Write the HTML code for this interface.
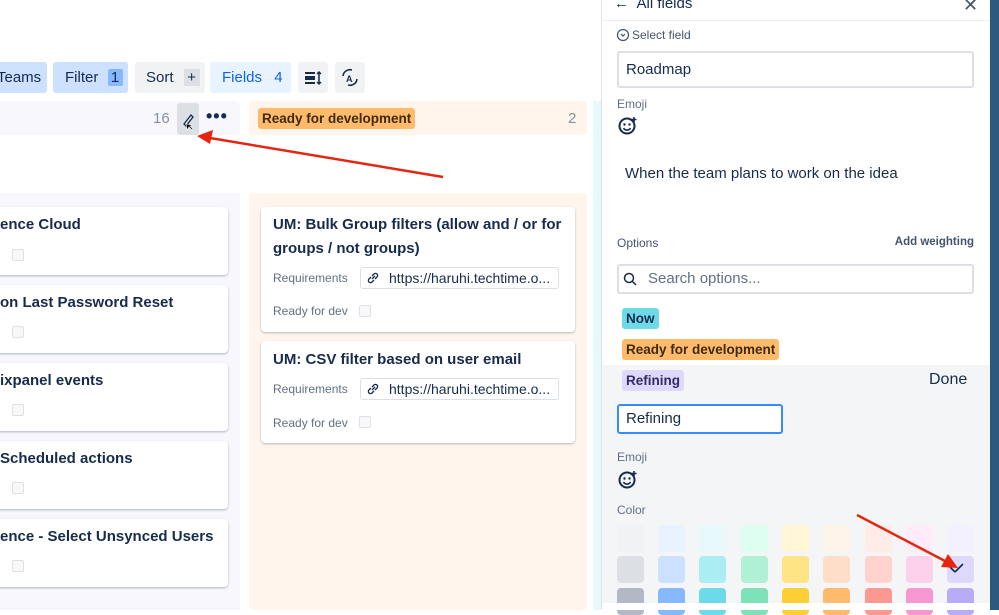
<!DOCTYPE html>
<html><head><style>
*{box-sizing:border-box;margin:0;padding:0}
body{width:999px;height:610px;overflow:hidden;background:#fff;font-family:"Liberation Sans",sans-serif;color:#172b4d;position:relative}
.a{position:absolute}
.btn{position:absolute;top:62px;height:31px;border-radius:3px;font-size:15px;line-height:31px;font-weight:500}
.card{position:absolute;background:#fff;border-radius:4px;box-shadow:0 1px 2px rgba(9,30,66,.3)}
.t{font-weight:bold;font-size:15px;color:#172b4d}
.cb{position:absolute;width:12px;height:12px;border:1px solid #dfe1e6;background:#f7f8f9;border-radius:2px}
.sm{font-size:12px;color:#626f86}
.link{position:absolute;height:22px;border:1px solid #dcdfe4;border-radius:3px;font-size:14px;line-height:20px;padding-left:28px;white-space:nowrap}
.sw{position:absolute;width:27px;height:27px;border-radius:4px}
.tag{position:absolute;border-radius:3px;padding:0 4px;height:21px;line-height:21px;font-size:13.5px;font-weight:bold}
</style></head><body>
<!-- toolbar -->
<div class="btn" style="left:-10px;width:57px;background:#cce0ff;padding-left:7px">Teams</div>
<div class="btn" style="left:53px;width:75px;background:#cce0ff;padding-left:12px">Filter <span style="display:inline-block;background:#85b8ff;width:15px;height:17px;line-height:17px;text-align:center;margin-left:5px;border-radius:2px">1</span></div>
<div class="btn" style="left:135px;width:70px;background:#f1f2f4;padding-left:11px">Sort <span style="display:inline-block;background:#dcdfe4;width:16px;height:17px;line-height:17px;text-align:center;margin-left:6px">+</span></div>
<div class="btn" style="left:210px;width:81px;background:#e9f2ff;color:#0c66e4;padding-left:12px">Fields <span style="margin-left:8px">4</span></div>
<div class="btn" style="left:298px;width:30px;background:#f1f2f4"><svg width="30" height="31"><rect x="7" y="10" width="10" height="2" fill="#172b4d"/><rect x="7" y="14" width="10" height="4" fill="#172b4d"/><rect x="7" y="20" width="10" height="2" fill="#172b4d"/><path d="M21 10v12M19 12l2-2 2 2M19 20l2 2 2-2" stroke="#172b4d" stroke-width="1.5" fill="none"/></svg></div>
<div class="btn" style="left:335px;width:30px;background:#f1f2f4"><svg width="30" height="31"><path d="M8 14a7 7 0 0 1 9-6M22 17a7 7 0 0 1-9 6" stroke="#172b4d" stroke-width="1.6" fill="none"/><text x="11" y="20" font-size="9" font-weight="bold" fill="#172b4d" font-family="Liberation Sans">A</text></svg></div>
<!-- left column -->
<div class="a" style="left:0;top:101px;width:240px;height:34px;background:#f7f7fd;border-radius:0 4px 4px 0"></div>
<div class="a" style="left:153px;top:110px;font-size:15px;color:#8590a2">16</div>
<div class="a" style="left:177px;top:103px;width:22px;height:32px;background:#dcdfe4;border-radius:3px"><svg width="22" height="32"><path d="M7 21l7-9 2 2-7 9z" stroke="#172b4d" fill="none" stroke-width="1.3"/><path d="M9 21l1 6 2-3 3 3 1-1-3-3 3-1z" fill="#000" stroke="#fff" stroke-width=".6"/></svg></div>
<div class="a" style="left:206px;top:106px;font-size:18px;font-weight:bold;letter-spacing:1px">•••</div>
<div class="a" style="left:0;top:193px;width:240px;height:417px;background:#f7f7fd"></div>
<div class="card" style="left:-5px;top:207px;width:233px;height:68px"><div class="t a" style="left:5px;top:9px">ence Cloud</div><div class="cb" style="left:17px;top:42px"></div></div>
<div class="card" style="left:-5px;top:285px;width:233px;height:68px"><div class="t a" style="left:5px;top:9px">on Last Password Reset</div><div class="cb" style="left:17px;top:41px"></div></div>
<div class="card" style="left:-5px;top:363px;width:233px;height:68px"><div class="t a" style="left:5px;top:9px">ixpanel events</div><div class="cb" style="left:17px;top:41px"></div></div>
<div class="card" style="left:-5px;top:441px;width:233px;height:68px"><div class="t a" style="left:5px;top:9px">Scheduled actions</div><div class="cb" style="left:17px;top:41px"></div></div>
<div class="card" style="left:-5px;top:519px;width:233px;height:68px"><div class="t a" style="left:5px;top:9px">ence - Select Unsynced Users</div><div class="cb" style="left:17px;top:41px"></div></div>
<!-- right column -->
<div class="a" style="left:249px;top:101px;width:338px;height:34px;background:#fff5ec;border-radius:4px"></div>
<div class="tag" style="left:258px;top:108px;background:#ffbb6b;color:#3d2a10">Ready for development</div>
<div class="a" style="left:568px;top:110px;font-size:15px;color:#8590a2">2</div>
<div class="a" style="left:249px;top:193px;width:338px;height:417px;background:#fff5ec;border-radius:4px"></div>
<div class="card" style="left:261px;top:207px;width:314px;height:125px">
<div class="t a" style="left:12px;top:6px;line-height:24px;width:295px">UM: Bulk Group filters (allow and / or for groups / not groups)</div>
<div class="sm a" style="left:12px;top:64px">Requirements</div>
<div class="link" style="left:99px;top:60px;width:199px">https://haruhi.techtime.o...</div>
<svg class="a" style="left:105px;top:64px" width="14" height="14"><path d="M6 8l3-3M5 6l-2 2a2 2 0 0 0 3 3l2-2M9 8l2-2a2 2 0 0 0-3-3L6 5" stroke="#172b4d" stroke-width="1.3" fill="none"/></svg>
<div class="sm a" style="left:12px;top:97px">Ready for dev</div><div class="cb" style="left:98px;top:98px"></div></div>
<div class="card" style="left:261px;top:341px;width:314px;height:102px">
<div class="t a" style="left:12px;top:10px">UM: CSV filter based on user email</div>
<div class="sm a" style="left:12px;top:41px">Requirements</div>
<div class="link" style="left:99px;top:37px;width:199px">https://haruhi.techtime.o...</div>
<svg class="a" style="left:105px;top:41px" width="14" height="14"><path d="M6 8l3-3M5 6l-2 2a2 2 0 0 0 3 3l2-2M9 8l2-2a2 2 0 0 0-3-3L6 5" stroke="#172b4d" stroke-width="1.3" fill="none"/></svg>
<div class="sm a" style="left:12px;top:75px">Ready for dev</div><div class="cb" style="left:98px;top:75px"></div></div>
<div class="a" style="left:593px;top:101px;width:8px;height:509px;background:#e7f9fc"></div>
<svg class="a" style="left:0;top:0" width="999" height="610"><line x1="443" y1="177" x2="210" y2="138" stroke="#e5260f" stroke-width="2.5"/><path d="M197 136l16-6-3 14z" fill="#e5260f"/></svg>
<!-- panel -->
<div class="a" style="left:601px;top:0;width:389px;height:610px;background:#fff;border-left:1px solid #dfe1e6"></div>
<div class="a" style="left:990px;top:0;width:9px;height:610px;background:#2c5a7e"></div>
<div class="a" style="left:601px;top:20px;width:389px;height:1px;background:#eceef1"></div>
<div class="a" style="left:614px;top:-5px;font-size:15px;font-weight:500">&larr;&nbsp; All fields</div>
<div class="a" style="left:963px;top:-5px;font-size:18px;color:#44546f">✕</div>
<svg class="a" style="left:616px;top:28px" width="14" height="14"><circle cx="7" cy="7" r="5.5" stroke="#44546f" fill="none" stroke-width="1.2"/><path d="M5 6l2 2 2-2" stroke="#44546f" fill="none" stroke-width="1.2"/></svg>
<div class="a" style="left:632px;top:28px;font-size:12px;color:#44546f">Select field</div>
<div class="a" style="left:617px;top:51px;width:357px;height:37px;border:2px solid #dcdfe4;border-radius:3px;font-size:15px;line-height:33px;padding-left:7px">Roadmap</div>
<div class="a" style="left:617px;top:97px;font-size:12px;color:#626f86">Emoji</div>
<svg class="a" style="left:617px;top:116px" width="22" height="20"><circle cx="10" cy="10" r="7.5" stroke="#172b4d" stroke-width="2" fill="none"/><circle cx="7.5" cy="8.5" r="1.2" fill="#172b4d"/><circle cx="12.5" cy="8.5" r="1.2" fill="#172b4d"/><path d="M6.5 12a4 4 0 0 0 7 0" stroke="#172b4d" stroke-width="1.6" fill="none"/><path d="M17 1v5M14.5 3.5h5" stroke="#172b4d" stroke-width="1.6"/></svg>
<div class="a" style="left:625px;top:165px;font-size:15px">When the team plans to work on the idea</div>
<div class="a" style="left:617px;top:236px;font-size:12px;color:#44546f">Options</div>
<div class="a" style="right:25px;top:236px;font-size:11.5px;color:#44546f;font-weight:bold">Add weighting</div>
<div class="a" style="left:617px;top:264px;width:357px;height:30px;border:2px solid #dcdfe4;border-radius:3px;font-size:15px;line-height:26px;padding-left:29px;color:#626f86">Search options...</div>
<svg class="a" style="left:623px;top:272px" width="14" height="14"><circle cx="6" cy="6" r="4.5" stroke="#172b4d" stroke-width="1.5" fill="none"/><path d="M9.5 9.5l3.5 3.5" stroke="#172b4d" stroke-width="1.5"/></svg>
<div class="tag" style="left:622px;top:308px;background:#6cdae9">Now</div>
<div class="tag" style="left:622px;top:339px;background:#ffbb6b;color:#3d2a10">Ready for development</div>
<div class="a" style="left:602px;top:365px;width:388px;height:245px;background:#f4f5f7"></div>
<div class="tag" style="left:622px;top:370px;background:#dfd8fd;color:#352c63">Refining</div>
<div class="a" style="left:929px;top:371px;font-size:16px;font-weight:500">Done</div>
<div class="a" style="left:617px;top:404px;width:166px;height:30px;border:2px solid #388bff;border-radius:3px;background:#fff;font-size:15px;line-height:26px;padding-left:7px">Refining</div>
<div class="a" style="left:617px;top:450px;font-size:12px;color:#626f86">Emoji</div>
<svg class="a" style="left:617px;top:470px" width="22" height="20"><circle cx="10" cy="10" r="7.5" stroke="#172b4d" stroke-width="2" fill="none"/><circle cx="7.5" cy="8.5" r="1.2" fill="#172b4d"/><circle cx="12.5" cy="8.5" r="1.2" fill="#172b4d"/><path d="M6.5 12a4 4 0 0 0 7 0" stroke="#172b4d" stroke-width="1.6" fill="none"/><path d="M17 1v5M14.5 3.5h5" stroke="#172b4d" stroke-width="1.6"/></svg>
<div class="a" style="left:617px;top:503px;font-size:12px;color:#626f86">Color</div>
<div class="sw" style="left:617px;top:525px;background:#f1f2f4"></div><div class="sw" style="left:658px;top:525px;background:#e9f2ff"></div><div class="sw" style="left:699px;top:525px;background:#e7f9fc"></div><div class="sw" style="left:741px;top:525px;background:#dcfff1"></div><div class="sw" style="left:782px;top:525px;background:#fff7d6"></div><div class="sw" style="left:823px;top:525px;background:#fff4e8"></div><div class="sw" style="left:865px;top:525px;background:#ffece8"></div><div class="sw" style="left:906px;top:525px;background:#ffecf8"></div><div class="sw" style="left:947px;top:525px;background:#f3f0ff"></div>
<div class="sw" style="left:617px;top:556px;background:#dcdfe4"></div><div class="sw" style="left:658px;top:556px;background:#cce0ff"></div><div class="sw" style="left:699px;top:556px;background:#aaeef3"></div><div class="sw" style="left:741px;top:556px;background:#b0f1d5"></div><div class="sw" style="left:782px;top:556px;background:#ffe486"></div><div class="sw" style="left:823px;top:556px;background:#fedec8"></div><div class="sw" style="left:865px;top:556px;background:#ffd2cc"></div><div class="sw" style="left:906px;top:556px;background:#fdd0ec"></div><div class="sw" style="left:947px;top:556px;background:#dfd8fd"></div>
<div class="sw" style="left:617px;top:588px;background:#b3b9c4"></div><div class="sw" style="left:658px;top:588px;background:#85b8ff"></div><div class="sw" style="left:699px;top:588px;background:#6cdae9"></div><div class="sw" style="left:741px;top:588px;background:#7ee2b8"></div><div class="sw" style="left:782px;top:588px;background:#fcd034"></div><div class="sw" style="left:823px;top:588px;background:#ffbb6b"></div><div class="sw" style="left:865px;top:588px;background:#fd9891"></div><div class="sw" style="left:906px;top:588px;background:#f797d2"></div><div class="sw" style="left:947px;top:588px;background:#b8acf6"></div>
<div class="a" style="left:602px;top:603px;width:388px;height:7px;background:#fff"></div>
<svg class="a" style="left:0;top:0" width="999" height="610"><path d="M955 572l-5-5M955 572l8-8" stroke="#172b4d" stroke-width="1.6" fill="none"/><line x1="857" y1="515" x2="945" y2="561" stroke="#e5260f" stroke-width="2.5"/><path d="M958 568l-17-1 7-13z" fill="#e5260f"/></svg>
</body></html>
